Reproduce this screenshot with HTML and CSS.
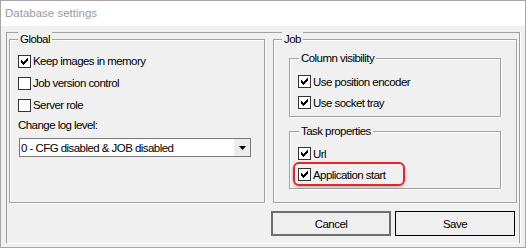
FILE: index.html
```html
<html>
    <head>
        <meta http-equiv="Content-Type" content="text/html; charset=utf-8">
        <title>Database settings</title>
        <link rel="stylesheet" href="styles.css">
    </head>
    <body>
        <div class="window">
            <div class="titlebar">Database settings</div>
            <div class="client">
                <div class="panel">
                    <div class="groups">
                        <div class="groupbox global">
                            <span class="legend">Global</span>
                            <div class="check"><span class="box"><svg width="11" height="11" viewBox="0 0 11 11"><path d="M8 2h1v1h-1z M7 3h2v1h-2z M2 4h1v1h-1z M6 4h3v1h-3z M2 5h2v1h-2z M5 5h3v1h-3z M2 6h5v1h-5z M3 7h3v1h-3z M4 8h1v1h-1z"/></svg></span>Keep images in memory</div>
                            <div class="check"><span class="box"></span>Job version control</div>
                            <div class="check"><span class="box"></span>Server role</div>
                            <div class="caption">Change log level:</div>
                            <div class="combo">
                                <span class="comboText">0 - CFG disabled &amp; JOB disabled</span>
                                <span class="comboButton"><svg width="7" height="4" viewBox="0 0 7 4"><path d="M0 0h7l-3.5 4z"/></svg></span>
                            </div>
                        </div>
                        <div class="groupbox job">
                            <span class="legend">Job</span>
                            <div class="groupbox sub columns">
                                <span class="legend">Column visibility</span>
                                <div class="check small"><span class="box"><svg width="11" height="11" viewBox="0 0 11 11"><path d="M8 2h1v1h-1z M7 3h2v1h-2z M2 4h1v1h-1z M6 4h3v1h-3z M2 5h2v1h-2z M5 5h3v1h-3z M2 6h5v1h-5z M3 7h3v1h-3z M4 8h1v1h-1z"/></svg></span>Use position encoder</div>
                                <div class="check small"><span class="box"><svg width="11" height="11" viewBox="0 0 11 11"><path d="M8 2h1v1h-1z M7 3h2v1h-2z M2 4h1v1h-1z M6 4h3v1h-3z M2 5h2v1h-2z M5 5h3v1h-3z M2 6h5v1h-5z M3 7h3v1h-3z M4 8h1v1h-1z"/></svg></span>Use socket tray</div>
                            </div>
                            <div class="groupbox sub tasks">
                                <span class="legend">Task properties</span>
                                <div class="check small"><span class="box"><svg width="11" height="11" viewBox="0 0 11 11"><path d="M8 2h1v1h-1z M7 3h2v1h-2z M2 4h1v1h-1z M6 4h3v1h-3z M2 5h2v1h-2z M5 5h3v1h-3z M2 6h5v1h-5z M3 7h3v1h-3z M4 8h1v1h-1z"/></svg></span>Url</div>
                                <div class="check small"><span class="box"><svg width="11" height="11" viewBox="0 0 11 11"><path d="M8 2h1v1h-1z M7 3h2v1h-2z M2 4h1v1h-1z M6 4h3v1h-3z M2 5h2v1h-2z M5 5h3v1h-3z M2 6h5v1h-5z M3 7h3v1h-3z M4 8h1v1h-1z"/></svg></span>Application start<span class="highlight"></span></div>
                            </div>
                        </div>
                    </div>
                    <div class="buttons">
                        <button class="btn cancel">Cancel</button>
                        <button class="btn save">Save</button>
                    </div>
                </div>
            </div>
        </div>
    </body>
</html>
```

FILE: styles.css
```css
body{
    margin: 0;
}
.window{
    width: 526px;
    height: 248px;
    box-sizing: border-box;
    border: 1px solid #a6a6a6;
    background: #f0f0f0;
    font-family: "Liberation Sans", Arial, sans-serif;
    font-size: 11.5px;
    letter-spacing: -0.55px;
    color: #000;
    overflow: hidden;
}
.titlebar{
    height: 25px;
    line-height: 25px;
    padding-left: 4px;
    background: #fff;
    color: #9a9a9a;
    letter-spacing: 0;
}
.client{
    padding: 6px 0 0 5px;
}
.panel{
    width: 514px;
    height: 212px;
    box-sizing: border-box;
    border: 1px solid #a0a0a0;
    border-bottom-color: #fff;
    box-shadow: 1px 0 0 #fff;
    padding: 6px 2px 0;
}
.groups{
    display: flex;
    gap: 8px;
    height: 164px;
}
.groupbox{
    position: relative;
    box-sizing: border-box;
    border: 1px solid #a0a0a0;
    box-shadow: inset 1px 1px 0 #fff, 1px 1px 0 #fff;
}
.legend{
    position: absolute;
    top: -8px;
    left: 8px;
    padding: 0 2px;
    line-height: 14px;
    background: #f0f0f0;
    white-space: nowrap;
}
.global{
    width: 256px;
    padding: 10px 0 0 8px;
}
.job{
    width: 244px;
    padding: 18px 15px 0;
}
.sub{
    width: 212px;
    padding: 12px 0 0 8px;
}
.sub .legend{
    left: 9px;
}
.columns{
    height: 59px;
}
.tasks{
    height: 58px;
    margin-top: 14px;
    padding-top: 11px;
}
.check{
    position: relative;
    display: flex;
    align-items: center;
    height: 22px;
    white-space: nowrap;
}
.check.small{
    height: 21px;
}
.box{
    width: 13px;
    height: 13px;
    box-sizing: border-box;
    border: 1px solid #333;
    background: #fff;
    margin-right: 2px;
    flex: none;
}
.box svg{
    display: block;
    shape-rendering: crispEdges;
}
.caption{
    margin-top: 2px;
    line-height: 14px;
}
.combo{
    display: flex;
    align-items: center;
    width: 232px;
    height: 19px;
    box-sizing: border-box;
    margin: 6px 0 0 1px;
    border: 1px solid #7a7a7a;
    background: #fff;
}
.comboText{
    flex: 1;
    padding-left: 1px;
}
.comboButton{
    display: flex;
    align-items: center;
    justify-content: center;
    width: 16px;
    height: 100%;
    background: #ececec;
}
.comboButton svg{
    display: block;
}
.highlight{
    position: absolute;
    left: -5px;
    top: -2px;
    width: 112px;
    height: 24px;
    box-sizing: border-box;
    border: 2px solid #e3262c;
    border-radius: 6px;
    box-shadow: 0 1px 3px rgba(0, 0, 0, 0.3);
}
.buttons{
    display: flex;
    justify-content: flex-end;
    gap: 4px;
    margin-top: 8px;
    padding-right: 2px;
}
.btn{
    width: 120px;
    height: 25px;
    box-sizing: border-box;
    padding: 0;
    background: #efefef;
    font: inherit;
    letter-spacing: inherit;
    color: #000;
}
.cancel{
    border: 2px solid #6e6e6e;
}
.save{
    border: 1px solid #000;
}
```
